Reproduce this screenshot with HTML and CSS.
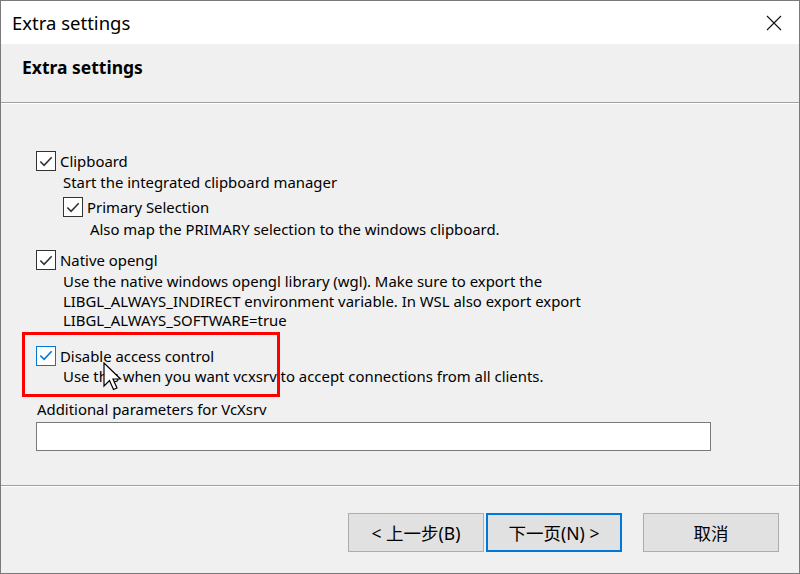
FILE: index.html
```html
<!DOCTYPE html>
<html>
<head>
<meta charset="utf-8">
<link rel="stylesheet" href="styles.css">
</head>
<body>
<div class="window">
  <div class="titlebar">
    <span class="title">Extra settings</span>
    <svg class="close" width="16" height="16" viewBox="0 0 16 16"><path d="M1 1 L15 15 M15 1 L1 15" stroke="#111" stroke-width="1.1" fill="none"/></svg>
  </div>
  <div class="header">
    <span class="heading">Extra settings</span>
  </div>
  <div class="content">
    <div class="row r-clip">
      <span class="cb"><svg viewBox="0 0 19 19" width="19" height="19"><path d="M3.5 9.5 L7.5 13.5 L15.5 5" stroke="#333" stroke-width="1.7" fill="none"/></svg></span>
      <span class="label">Clipboard</span>
    </div>
    <div class="desc d1">Start the integrated clipboard manager</div>
    <div class="row sub r-prim">
      <span class="cb"><svg viewBox="0 0 19 19" width="19" height="19"><path d="M3.5 9.5 L7.5 13.5 L15.5 5" stroke="#333" stroke-width="1.7" fill="none"/></svg></span>
      <span class="label">Primary Selection</span>
    </div>
    <div class="desc subdesc d2">Also map the PRIMARY selection to the windows clipboard.</div>
    <div class="row r-gl">
      <span class="cb"><svg viewBox="0 0 19 19" width="19" height="19"><path d="M3.5 9.5 L7.5 13.5 L15.5 5" stroke="#333" stroke-width="1.7" fill="none"/></svg></span>
      <span class="label">Native opengl</span>
    </div>
    <div class="desc d3">Use the native windows opengl library (wgl). Make sure to export the<br>LIBGL_ALWAYS_INDIRECT environment variable. In WSL also export export<br>LIBGL_ALWAYS_SOFTWARE=true</div>
    <div class="highlight">
      <div class="row r-acc">
        <span class="cb hover"><svg viewBox="0 0 19 19" width="19" height="19"><path d="M3.5 9.5 L7.5 13.5 L15.5 5" stroke="#0078d7" stroke-width="1.7" fill="none"/></svg></span>
        <span class="label">Disable access control</span>
      </div>
      <div class="desc d4">Use this when you want vcxsrv to accept connections from all clients.</div>
    </div>
    <div class="param-label">Additional parameters for VcXsrv</div>
    <div class="input"></div>
  </div>
  <div class="footer">
    <div class="btn">&lt; 上一步(B)</div>
    <div class="btn focus">下一页(N) &gt;</div>
    <div class="btn cancel">取消</div>
  </div>
  <svg class="cursor" width="20" height="30" viewBox="0 0 20 30"><path d="M1 1 L1 24 L6.5 18.5 L10.5 27.5 L14 26 L10 17 L17.5 17 Z" fill="#fff" stroke="#000" stroke-width="1.2" stroke-linejoin="miter"/></svg>
</div>
</body>
</html>
```
FILE: styles.css
```css
* { box-sizing: border-box; }
html, body { margin: 0; padding: 0; }
body {
  font-family: "Noto Sans", "Noto Sans CJK SC", sans-serif;
  color: #000;
  background: #fff;
}
.window {
  position: relative;
  width: 800px;
  height: 574px;
  border: 1px solid #7a7a7a;
  background: #f0f0f0;
  display: flex;
  flex-direction: column;
  overflow: hidden;
}
.titlebar {
  height: 43px;
  background: #fff;
  display: flex;
  align-items: center;
  justify-content: space-between;
  padding: 0 17px 0 11px;
  flex: none;
}
.title {
  font-size: 18.5px;
  padding-bottom: 1px;
}
.close { display: block; margin-top: 1px; }
.header {
  height: 59px;
  flex: none;
  background: #f0f0f0;
  padding: 11px 0 0 21px;
  border-bottom: 1px solid #a0a0a0;
}
.heading {
  font-size: 17.5px;
  font-weight: bold;
}
.content {
  flex: 1;
  border-top: 1px solid #fff;
  border-bottom: 1px solid #a0a0a0;
  padding-left: 35px;
  font-size: 14.9px;
}
.row {
  display: flex;
  align-items: center;
  height: 20px;
}
.cb {
  width: 20px;
  height: 20px;
  border: 1px solid #333;
  background: #fff;
  display: flex;
  align-items: center;
  justify-content: center;
  flex: none;
  margin-right: 4px;
}
.cb svg { display: block; }
.cb.hover { border-color: #0078d7; }
.label { line-height: 20px; }
.desc {
  line-height: 19px;
  padding-left: 27px;
}
.r-clip { margin-top: 47px; }
.d1 { margin-top: 2px; }
.sub { margin-left: 27px; }
.r-prim { margin-top: 5px; }
.subdesc { padding-left: 54px; }
.d2 { margin-top: 3px; }
.r-gl { margin-top: 11px; }
.d3 { margin-top: 2px; line-height: 19.5px; }
.highlight {
  margin-left: -14px;
  margin-top: 1px;
  width: 258px;
  height: 65px;
  border: 3px solid #f00;
  padding-left: 11px;
  padding-top: 11px;
  white-space: nowrap;
}
.d4 { margin-top: 1px; }
.param-label {
  margin-top: 2px;
  padding-left: 1px;
  line-height: 20px;
}
.input {
  margin-top: 3px;
  width: 675px;
  height: 29px;
  background: #fff;
  border: 1px solid #7a7a7a;
}
.footer {
  flex: none;
  height: 87px;
  border-top: 1px solid #fff;
  display: flex;
  align-items: flex-start;
  padding-top: 26px;
  padding-left: 347px;
}
.btn {
  width: 136px;
  height: 39px;
  background: #e1e1e1;
  border: 1px solid #adadad;
  display: flex;
  align-items: center;
  justify-content: center;
  font-size: 17.5px;
  font-family: "Noto Sans", "Noto Sans CJK SC", sans-serif;
}
.btn.focus {
  margin-left: 2px;
  border: 2px solid #0078d7;
}
.btn.cancel { margin-left: 21px; }
.cursor {
  position: absolute;
  left: 102px;
  top: 361px;
}
```
